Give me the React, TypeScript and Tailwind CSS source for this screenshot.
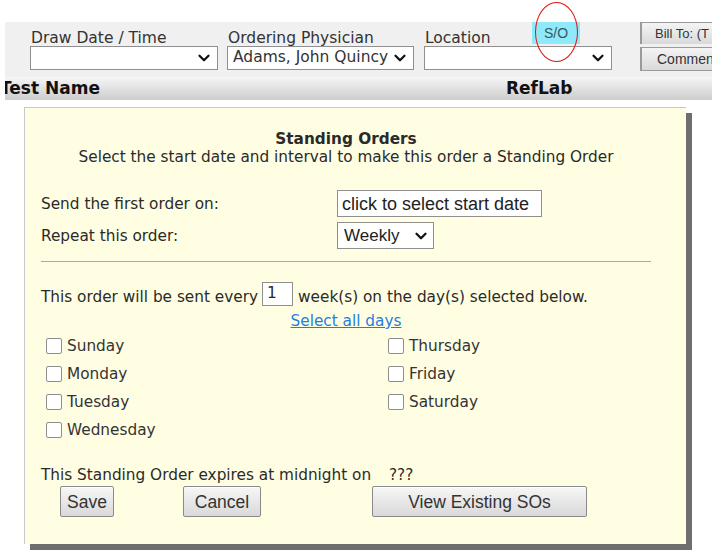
import { ChevronDown } from "lucide-react";

const sans = "font-['DejaVu_Sans',Verdana,sans-serif]";
const arial = "font-['Liberation_Sans',Arial,sans-serif]";

function Select({ value, w }: { value?: string; w: string }) {
  return (
    <div
      className={`${w} h-[24px] bg-white border border-[#8f8f8f] flex items-center justify-between pl-[5px] pr-[4px] ${sans} text-[15.5px] text-[#333]`}
    >
      <span className="truncate">{value}</span>
      <ChevronDown className="w-[18px] h-[18px] shrink-0 text-[#111]" strokeWidth={3} />
    </div>
  );
}

function Field({ label, value, w }: { label: string; value?: string; w: string }) {
  return (
    <div className="flex flex-col">
      <div className={`${sans} text-[15.5px] leading-[16px] text-[#333] pt-[8px] pl-[1px]`}>{label}</div>
      <Select value={value} w={w} />
    </div>
  );
}

function GrayButton({ label, w }: { label: string; w: string }) {
  return (
    <button
      className={`${w} h-[31px] border border-[#8a8a8a] rounded-[2px] bg-gradient-to-b from-[#f7f7f7] to-[#d9d9d9] ${arial} text-[17.5px] text-[#333] shadow-[inset_0_1px_0_#fff]`}
    >
      {label}
    </button>
  );
}

function Day({ label }: { label: string }) {
  return (
    <label className="flex items-center h-[28px] gap-[5px]">
      <span className="w-[16px] h-[16px] bg-white border border-[#8e8e8e] rounded-[2px] ml-[5px]" />
      <span>{label}</span>
    </label>
  );
}

export default function App() {
  return (
    <div className={`w-[718px] h-[559px] bg-white overflow-hidden ${sans}`}>
      {/* order header */}
      <div className="mt-[22px] ml-[5px] w-[707px] bg-[#f0f0f0]">
        <div className="flex h-[55px] pl-[25px]">
          <Field label="Draw Date / Time" w="w-[188px]" />
          <div className="ml-[9px]">
            <Field label="Ordering Physician" value="Adams, John Quincy" w="w-[187px]" />
          </div>
          <div className="ml-[10px] relative">
            <Field label="Location" w="w-[188px]" />
            <button
              className={`absolute left-[108px] top-0 w-[48px] h-[22px] bg-[#8eeaf8] ${arial} text-[14px] text-[#3a5560]`}
            >
              S/O
            </button>
            <div className="absolute left-[111px] -top-[20px] w-[43px] h-[60px] rounded-[50%] border-[1.5px] border-[#e01010]" />
          </div>
          <div className="ml-auto flex flex-col gap-[3px] w-[72px] overflow-hidden">
            <div
              className={`h-[22px] w-[90px] border-l-2 border-t border-[#9a9a9a] bg-gradient-to-b from-[#f4f4f4] to-[#dadada] ${arial} text-[13px] text-[#333] pl-[13px] flex items-center whitespace-nowrap`}
            >
              Bill To: (T
            </div>
            <div
              className={`h-[24px] w-[90px] border-l-2 border-t border-b border-[#9a9a9a] bg-gradient-to-b from-[#f4f4f4] to-[#dadada] ${arial} text-[14px] text-[#333] pl-[15px] flex items-center whitespace-nowrap`}
            >
              Comment
            </div>
          </div>
        </div>
        <div className="h-[23px] flex items-center bg-gradient-to-b from-[#f6f6f6] to-[#cdcdcd] font-bold text-[17px] text-[#111] overflow-hidden">
          <span className="-ml-[5px] w-[506px]">Test Name</span>
          <span>RefLab</span>
        </div>
      </div>

      {/* standing orders dialog */}
      <div className="mt-[7px] ml-[24px] w-[662px] h-[437px] bg-[#fffee3] border-l border-t border-[#c9c9c9] shadow-[6px_6px_0_#6e6e6e] pl-[16px] pr-[35px] pt-[22px] text-[15.3px] leading-[18px] text-[#2a2a2a]">
        <div className="text-center">
          <div className="font-bold leading-[18px]">Standing Orders</div>
          <div className="leading-[19px]">
            Select the start date and interval to make this order a Standing Order
          </div>
        </div>

        <div className="grid grid-cols-[296px_1fr] items-center gap-y-[5px] mt-[23px]">
          <span>Send the first order on:</span>
          <div
            className={`w-[205px] h-[27px] bg-white border border-[#8f8f8f] ${arial} text-[18px] text-[#222] pl-[4px] flex items-center whitespace-nowrap`}
          >
            click to select start date
          </div>
          <span>Repeat this order:</span>
          <div
            className={`w-[97px] h-[27px] bg-white border border-[#8f8f8f] ${arial} text-[17px] text-[#222] pl-[6px] pr-[3px] flex items-center justify-between`}
          >
            Weekly
            <ChevronDown className="w-[18px] h-[18px] text-[#111]" strokeWidth={3} />
          </div>
        </div>

        <div className="h-px bg-[#a9a9a9] mt-[12px]" />

        <div className="flex items-start mt-[20px]">
          <span className="pt-[6px]">This order will be sent every</span>
          <span className="w-[31px] h-[24px] bg-white border border-[#8f8f8f] ml-[4px] mr-[5px] pl-[4px] leading-[20px]">
            1
          </span>
          <span className="pt-[6px]">week(s) on the day(s) selected below.</span>
        </div>
        <div className="text-center mt-[6px]">
          <a className="text-[#1e7fe0] underline cursor-pointer">Select all days</a>
        </div>

        <div className="grid grid-cols-[342px_1fr] mt-[2px] text-[#333]">
          <div className="flex flex-col">
            <Day label="Sunday" />
            <Day label="Monday" />
            <Day label="Tuesday" />
            <Day label="Wednesday" />
          </div>
          <div className="flex flex-col">
            <Day label="Thursday" />
            <Day label="Friday" />
            <Day label="Saturday" />
          </div>
        </div>

        <div className="flex mt-[22px]">
          <span className="w-[348px]">This Standing Order expires at midnight on</span>
          <span>???</span>
        </div>
        <div className="flex mt-[2px]">
          <div className="ml-[19px]">
            <GrayButton label="Save" w="w-[54px]" />
          </div>
          <div className="ml-[69px]">
            <GrayButton label="Cancel" w="w-[78px]" />
          </div>
          <div className="ml-[111px]">
            <GrayButton label="View Existing SOs" w="w-[215px]" />
          </div>
        </div>
      </div>
    </div>
  );
}
